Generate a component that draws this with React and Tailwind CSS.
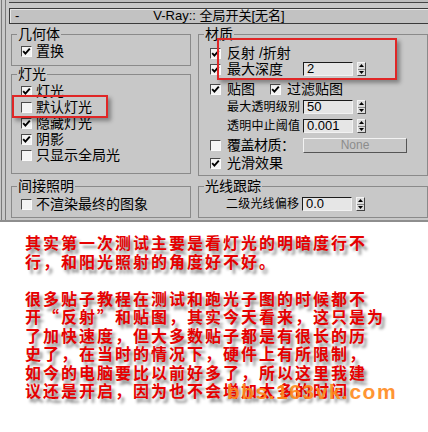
import React from "react";

function Box({ checked }) {
  return (
    <span className="w-[11px] h-[11px] shrink-0 bg-[#f3f3f3] border border-t-[#4a4a4a] border-l-[#4a4a4a] border-r-[#fafafa] border-b-[#fafafa] flex items-center justify-center">
      {checked && (
        <svg width="9" height="9" viewBox="0 0 9 9">
          <path d="M1.2 4.2 L3.4 6.6 L7.8 1.6" stroke="#000" strokeWidth="1.9" fill="none" />
        </svg>
      )}
    </span>
  );
}

function Spinner() {
  return (
    <div className="w-[9px] h-[14px] flex flex-col border border-t-[#f4f4f4] border-l-[#f4f4f4] border-r-[#444] border-b-[#444] bg-[#dcdcdc]">
      <div className="flex-1 flex items-center justify-center border-b border-[#888]">
        <svg width="5" height="3" viewBox="0 0 5 3">
          <path d="M0 3 L2.5 0 L5 3Z" fill="#000" />
        </svg>
      </div>
      <div className="flex-1 flex items-center justify-center">
        <svg width="5" height="3" viewBox="0 0 5 3">
          <path d="M0 0 L5 0 L2.5 3Z" fill="#000" />
        </svg>
      </div>
    </div>
  );
}

function Field({ value }) {
  return (
    <div className="flex items-center gap-[4px]">
      <div className="w-[50px] h-[14px] bg-[#e6e6e6] border border-t-[#1c1c1c] border-l-[#1c1c1c] border-r-[#f2f2f2] border-b-[#f2f2f2] text-[13px] leading-[12px] pl-[3px] flex items-center">
        {value}
      </div>
      <Spinner />
    </div>
  );
}

function Row({ checked, label, className = "" }) {
  return (
    <div className={`flex items-center h-[16px] gap-[4px] text-[14px] leading-[16px] ${className}`}>
      <Box checked={checked} />
      <span>{label}</span>
    </div>
  );
}

function Group({ title, className = "", children }) {
  return (
    <fieldset className={`border border-[#8a8a8a] ${className}`}>
      <legend className="ml-[5px] px-[1px] text-[14px] leading-[16px]">{title}</legend>
      {children}
    </fieldset>
  );
}

const panelFont = "font-['Liberation_Sans','Noto_Sans_CJK_SC',sans-serif]";

export default function App() {
  const para1 = [
    "其实第一次测试主要是看灯光的明暗度行不",
    "行，和阳光照射的角度好不好。",
  ];
  const para2 = [
    "很多贴子教程在测试和跑光子图的时候都不",
    "开“反射”和贴图，其实今天看来，这只是为",
    "了加快速度，但大多数贴子都是有很长的历",
    "史了，在当时的情况下，硬件上有所限制，",
    "如今的电脑要比以前好多了，所以这里我建",
    "议还是开启，因为也不会增加太多的时间",
  ];

  return (
    <div className="w-[428px] h-[432px] bg-white relative overflow-hidden">
      <div className={`h-[222px] bg-[#c8c8c8] overflow-hidden border-b-2 border-[#8e8e8e] pl-[1px] text-black ${panelFont}`}>
        <div className="h-full border-l border-[#7a7a7a] pl-[3px]">
          <div className="h-full border-l border-[#7a7a7a]">
            <div className="h-[3px] ml-[3px] border-b border-[#444] bg-[#bdbdbd]" />
            <div className="ml-[3px] mt-[5px] w-[420px] h-[16px] border border-[#3a3a3a] bg-[#c2c2c2] shadow-[inset_1px_1px_0_#e6e6e6] flex items-center text-[13px] leading-[14px]">
              <span className="w-[24px] pl-[5px]">-</span>
              <span className="flex-1 text-center">V-Ray:: 全局开关[无名]</span>
              <span className="w-[24px]" />
            </div>

            <div className="flex mt-[2px] ml-[5px]">
              <div className="w-[194px] flex flex-col">
                <Group title="几何体" className="pb-[6px]">
                  <div className="pl-[9px] pt-[1px]">
                    <Row checked label="置换" />
                  </div>
                </Group>
                <Group title="灯光" className="pb-[10px]">
                  <div className="pl-[9px] pt-[1px]">
                    <Row checked label="灯光" />
                    <Row label="默认灯光" />
                    <Row checked label="隐藏灯光" />
                    <Row checked label="阴影" />
                    <Row label="只显示全局光" />
                  </div>
                </Group>
                <Group title="间接照明" className="mt-[4px] pb-[5px]">
                  <div className="pl-[9px] pt-[2px]">
                    <Row label="不渲染最终的图象" />
                  </div>
                </Group>
              </div>

              <div className="ml-[7px] w-[230px] shrink-0 flex flex-col">
                <Group title="材质" className="pb-[4px]">
                  <div className="pl-[11px] pt-[3px] flex flex-col">
                    <Row checked label="反射 /折射" className="gap-[6px]" />
                    <div className="flex items-center h-[16px]">
                      <div className="w-[93px] flex items-center gap-[6px] text-[14px]">
                        <Box checked />
                        <span>最大深度</span>
                      </div>
                      <Field value="2" />
                    </div>
                    <div className="flex items-center h-[16px] mt-[4px] text-[14px]">
                      <div className="w-[60px] flex items-center gap-[6px]">
                        <Box checked />
                        <span>贴图</span>
                      </div>
                      <div className="flex items-center gap-[6px]">
                        <Box checked />
                        <span>过滤贴图</span>
                      </div>
                    </div>
                    <div className="flex items-center h-[16px] mt-[2px] pl-[17px]">
                      <span className="w-[76px] text-[12px] tracking-[0.2px]">最大透明级别</span>
                      <Field value="50" />
                    </div>
                    <div className="flex items-center h-[16px] mt-[3px] pl-[17px]">
                      <span className="w-[76px] text-[12px] tracking-[0.2px]">透明中止阈值</span>
                      <Field value="0.001" />
                    </div>
                    <div className="flex items-center h-[16px] mt-[3px]">
                      <div className="w-[93px] flex items-center gap-[6px] text-[14px]">
                        <Box />
                        <span className="tracking-[-0.5px]">覆盖材质：</span>
                      </div>
                      <div className="w-[104px] h-[15px] bg-[#c8c8c8] border border-t-[#f2f2f2] border-l-[#f2f2f2] border-r-[#555] border-b-[#555] text-[12px] leading-[13px] text-[#8c8c8c] text-center">
                        None
                      </div>
                    </div>
                    <Row checked label="光滑效果" className="gap-[6px] mt-[2px]" />
                  </div>
                </Group>
                <Group title="光线跟踪" className="mt-[2px] pb-[5px]">
                  <div className="pl-[27px] pt-[2px]">
                    <div className="flex items-center h-[16px]">
                      <span className="w-[76px] text-[12px] tracking-[0.2px]">二级光线偏移</span>
                      <Field value="0.0" />
                    </div>
                  </div>
                </Group>
              </div>
            </div>
          </div>
        </div>
      </div>

      <div className="pl-[25px] pt-[11px] font-['Noto_Sans_CJK_SC',sans-serif] font-bold text-[16px] leading-[18.5px] tracking-[2px] text-[#e60000] [text-shadow:3px_4px_3px_rgba(0,0,0,0.45)]">
        <div>
          {para1.map((l) => (
            <div key={l} className="whitespace-nowrap">{l}</div>
          ))}
        </div>
        <div className="mt-[18.5px]">
          {para2.map((l) => (
            <div key={l} className="whitespace-nowrap">{l}</div>
          ))}
        </div>
      </div>

      <div className="absolute left-[12px] top-[95px] w-[96px] h-[23px] border-2 border-[#e02626] shadow-[3px_3px_4px_rgba(0,0,0,0.35)]" />
      <div className="absolute left-[217px] top-[38px] w-[180px] h-[42px] border-2 border-[#e02626] shadow-[3px_3px_4px_rgba(0,0,0,0.35)]" />

      <div className="absolute left-[227px] top-[381px] font-['Liberation_Sans',sans-serif] font-bold text-[21px] leading-[22px] tracking-[1.5px] text-[#ff8a1c] opacity-90">
        bbs.163vk.com
      </div>
    </div>
  );
}
